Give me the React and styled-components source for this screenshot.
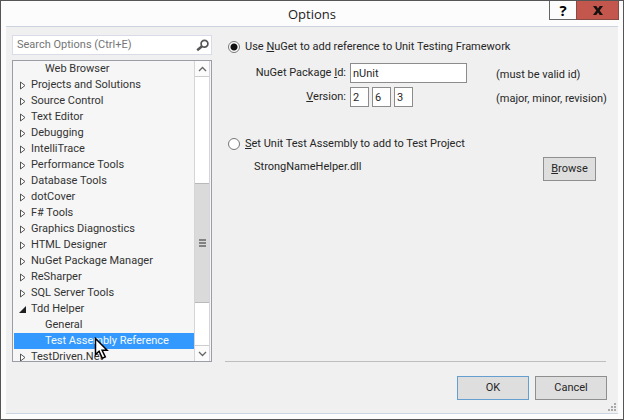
import React, { useState } from "react";
import styled, { createGlobalStyle } from "styled-components";

const GlobalStyle = createGlobalStyle`
  *, *::before, *::after { box-sizing: border-box; }
  body { margin: 0; background: #fcfcfc; }
  body, button, input { font: 11px/16px Roboto, "Open Sans", sans-serif; color: #262626; }
`;

const Dialog = styled.main`
  display: flex;
  flex-direction: column;
  min-height: 100vh;
  padding: 0 5px 5px;
  border: 1px solid #555;
  background: #fcfcfc;
`;

const TitleBar = styled.header`
  display: grid;
  grid-template-columns: 1fr auto 1fr;
  height: 25px;
`;

const Title = styled.h1`
  grid-column: 2;
  margin: 0;
  font-family: "Open Sans", sans-serif;
  font-size: 13px;
  line-height: 26px;
  font-weight: 400;
  color: #1c1c1c;
`;

const WindowButtons = styled.div`
  display: flex;
  justify-content: flex-end;
  align-items: flex-start;
  margin-right: -1px;
`;

const WindowButton = styled.button`
  display: grid;
  place-items: center;
  width: ${(p) => (p.$close ? "43px" : "27px")};
  height: 19px;
  padding: 0;
  border: 1px solid ${(p) => (p.$close ? "#8a4a44" : "#666")};
  border-top: 0;
  border-right-width: ${(p) => (p.$close ? "1px" : "0")};
  background: ${(p) => (p.$close ? "#c4574d" : "#fcfcfc")};
  color: #000;
  font-family: "Open Sans", sans-serif;
  font-size: 15px;
  font-weight: 700;
  line-height: 18px;
`;

const Content = styled.div`
  flex: 1;
  display: flex;
  flex-direction: column;
  gap: 14px;
  padding: 8px 11px 13px 6px;
  border-top: 1px solid #ccd3df;
  border-bottom: 1px solid #ccd6e2;
  background: #f0f0f0;
  position: relative;
`;

const Columns = styled.div`
  flex: 1;
  display: grid;
  grid-template-columns: 200px minmax(0, 1fr);
  gap: 13px;
`;

const Sidebar = styled.div`
  display: flex;
  flex-direction: column;
  gap: 5px;
`;

const SearchBox = styled.label`
  display: flex;
  align-items: center;
  height: 20px;
  padding: 0 2px 0 4px;
  border: 1px solid #d9dbe6;
  background: #fff;
`;

const SearchInput = styled.input`
  flex: 1;
  min-width: 0;
  padding: 0;
  border: 0;
  outline: 0;
  background: transparent;
  &::placeholder { color: #757575; opacity: 1; }
`;

const TreeFrame = styled.div`
  flex: 1 1 0;
  display: flex;
  min-height: 0;
  padding-right: 1px;
  border: 1px solid #9a9da6;
  background: #f6f6f6;
  overflow: hidden;
`;

const Tree = styled.ul`
  flex: 1;
  height: 0;
  margin: 0;
  padding: 0 0 0 1px;
  list-style: none;
`;

const TreeItem = styled.li`
  position: relative;
`;

const TreeRow = styled.button`
  display: flex;
  align-items: center;
  gap: 3px;
  width: 100%;
  height: 16px;
  padding: 0 0 0 ${(p) => (p.$child ? "31px" : "5px")};
  border: 0;
  background: ${(p) => (p.$selected ? "#3399ff" : "transparent")};
  color: ${(p) => (p.$selected ? "#f4f9ff" : "#333")};
  white-space: nowrap;
`;

const Pointer = styled.svg`
  position: absolute;
  left: 80px;
  top: 4px;
  z-index: 1;
  pointer-events: none;
`;

const ScrollBar = styled.div`
  display: flex;
  flex-direction: column;
  width: 16px;
  border: 1px solid #d5d5d5;
  border-top: 0;
  border-bottom: 0;
  background: #fff;
`;

const ScrollButton = styled.button`
  display: grid;
  place-items: center;
  height: 16px;
  padding: 0;
  border: 0 solid #cdcdcd;
  border-width: ${(p) => (p.$down ? "1px 0 0" : "0 0 1px")};
  background: #fbfbfb;
`;

const ScrollTrack = styled.div`
  flex: 1;
  display: grid;
  grid-template-rows: 106fr 121fr 42fr;
`;

const ScrollThumb = styled.div`
  grid-row: 2;
  display: grid;
  place-items: center;
  border: 1px solid #b9b9b9;
  border-width: 1px 0;
  background: #dadada;
`;

const Page = styled.section`
  display: flex;
  flex-direction: column;
  margin-right: 1px;
  padding-top: 4px;
  border-bottom: 1px solid #bdbfbd;
`;

const RadioLabel = styled.label`
  display: flex;
  align-items: center;
  gap: 5px;
  padding-left: 3px;
`;

const Radio = styled.input.attrs({ type: "radio" })`
  appearance: none;
  width: 12px;
  height: 12px;
  margin: 0;
  border: 1px solid #777;
  border-radius: 50%;
  background: #fff;
  &:checked { background: radial-gradient(circle, #111 0 3px, #fff 4px); }
`;

const Fields = styled.div`
  display: grid;
  grid-template-columns: 121px 117px 1fr;
  gap: 4px;
  align-items: center;
  padding: 8px 0 29px;
`;

const FieldLabel = styled.label`
  justify-self: end;
`;

const TextBox = styled.input`
  width: 100%;
  height: 20px;
  padding: 0 2px;
  border: 1px solid #8c8c8c;
  border-radius: 0;
  background: #fff;
`;

const VersionParts = styled.div`
  display: grid;
  grid-template-columns: repeat(3, 19px);
  gap: 3px;
`;

const Hint = styled.span`
  padding: 4px 0 0 25px;
  white-space: nowrap;
`;

const AssemblyRow = styled.div`
  display: flex;
  justify-content: space-between;
  padding: 5px 10px 0 29px;
`;

const FileName = styled.span`
  padding-top: 2px;
`;

const Button = styled.button`
  width: ${(p) => (p.$small ? "53px" : "72px")};
  height: 24px;
  padding: 0;
  border: 1px solid ${(p) => (p.$primary ? "#659fd0" : "#8f8f8f")};
  background: #dedede;
`;

const Footer = styled.footer`
  display: flex;
  justify-content: flex-end;
  gap: 6px;
`;

const Grip = styled.svg`
  position: absolute;
  right: 2px;
  bottom: 1px;
`;

const ITEMS = [
  "- Web Browser", "Projects and Solutions", "Source Control", "Text Editor", "Debugging",
  "IntelliTrace", "Performance Tools", "Database Tools", "dotCover", "F# Tools",
  "Graphics Diagnostics", "HTML Designer", "NuGet Package Manager", "ReSharper",
  "SQL Server Tools", "Tdd Helper", "- General", "- Test Assembly Reference", "TestDriven.Net",
].map((entry) => ({ name: entry.replace(/^- /, ""), child: entry.startsWith("- ") }));

const Arrow = ({ open }) => (
  <svg width="9" height="9" viewBox="0 0 9 9" aria-hidden="true">
    {open ? <path d="M7 1v7H0z" fill="#1e1e1e" /> : <path d="M1.500 1v7L6 4.500z" fill="#fff" stroke="#555" />}
  </svg>
);

const Chevron = ({ down }) => (
  <svg width="9" height="6" viewBox="0 0 9 6" aria-hidden="true">
    <path d={down ? "M1 1l3.500 3.500L8 1" : "M1 5l3.500-3.500L8 5"} fill="none" stroke="#666" strokeWidth="1.300" />
  </svg>
);

export default function App() {
  const [source, setSource] = useState("nuget");
  const [selected, setSelected] = useState("Test Assembly Reference");

  return (
    <>
      <GlobalStyle />
      <Dialog>
        <TitleBar>
          <Title>Options</Title>
          <WindowButtons>
            <WindowButton aria-label="Help">?</WindowButton>
            <WindowButton $close aria-label="Close">
              <svg width="10" height="9" viewBox="0 0 10 9">
                <path d="M0 0h3.300L5 2.400 6.700 0H10L6.700 4.400 10 9H6.700L5 6.400 3.300 9H0l3.300-4.600z" fill="#16100f" />
              </svg>
            </WindowButton>
          </WindowButtons>
        </TitleBar>
        <Content>
          <Columns>
            <Sidebar>
              <SearchBox>
                <SearchInput aria-label="Search Options" placeholder="Search Options (Ctrl+E)" />
                <svg width="13" height="13" viewBox="0 0 13 13" fill="none" stroke="#555" aria-hidden="true">
                  <circle cx="8.500" cy="4.800" r="3.400" strokeWidth="1.700" />
                  <path d="M6 7.300L1.200 11.200" strokeWidth="2.400" />
                </svg>
              </SearchBox>
              <TreeFrame>
                <Tree>
                  {ITEMS.map(({ name, child }) => (
                    <TreeItem key={name}>
                      <TreeRow $child={child} $selected={selected === name} onClick={() => setSelected(name)}>
                        {!child && <Arrow open={name === "Tdd Helper"} />}
                        {name}
                      </TreeRow>
                      {name === "Test Assembly Reference" && (
                        <Pointer width="15" height="23" viewBox="0 0 15 23" aria-hidden="true">
                          <path d="M1.500 1.500v16l3.600-3.300 3.200 7 3-1.300-3.200-6.700h5z" fill="#fff" stroke="#000" strokeWidth="1.500" />
                        </Pointer>
                      )}
                    </TreeItem>
                  ))}
                </Tree>
                <ScrollBar>
                  <ScrollButton aria-label="Scroll up"><Chevron /></ScrollButton>
                  <ScrollTrack>
                    <ScrollThumb>
                      <svg width="7" height="8" viewBox="0 0 7 8" aria-hidden="true">
                        <path d="M0 1h7M0 4h7M0 7h7" stroke="#666" strokeWidth="1.500" />
                      </svg>
                    </ScrollThumb>
                  </ScrollTrack>
                  <ScrollButton $down aria-label="Scroll down"><Chevron down /></ScrollButton>
                </ScrollBar>
              </TreeFrame>
            </Sidebar>
            <Page>
              <RadioLabel>
                <Radio name="source" checked={source === "nuget"} onChange={() => setSource("nuget")} />
                <span>Use <u>N</u>uGet to add reference to Unit Testing Framework</span>
              </RadioLabel>
              <Fields>
                <FieldLabel htmlFor="package">NuGet Package <u>I</u>d:</FieldLabel>
                <TextBox id="package" defaultValue="nUnit" />
                <Hint>(must be valid id)</Hint>
                <FieldLabel htmlFor="major"><u>V</u>ersion:</FieldLabel>
                <VersionParts>
                  <TextBox id="major" defaultValue="2" />
                  <TextBox aria-label="Minor version" defaultValue="6" />
                  <TextBox aria-label="Revision" defaultValue="3" />
                </VersionParts>
                <Hint>(major, minor, revision)</Hint>
              </Fields>
              <RadioLabel>
                <Radio name="source" checked={source === "assembly"} onChange={() => setSource("assembly")} />
                <span><u>S</u>et Unit Test Assembly to add to Test Project</span>
              </RadioLabel>
              <AssemblyRow>
                <FileName>StrongNameHelper.dll</FileName>
                <Button $small><u>B</u>rowse</Button>
              </AssemblyRow>
            </Page>
          </Columns>
          <Footer>
            <Button $primary>OK</Button>
            <Button>Cancel</Button>
          </Footer>
          <Grip width="9" height="9" viewBox="0 0 9 9" fill="#aaa" aria-hidden="true">
            <path d="M7 0h2v2H7zM4 3h2v2H4zM7 3h2v2H7zM1 6h2v2H1zM4 6h2v2H4zM7 6h2v2H7z" />
          </Grip>
        </Content>
      </Dialog>
    </>
  );
}
